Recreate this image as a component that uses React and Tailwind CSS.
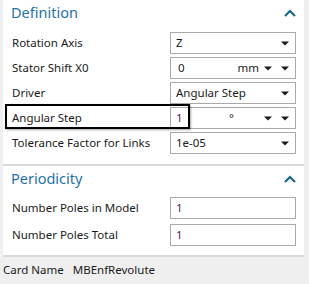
import React from 'react';

function Caret() {
  return (
    <svg width="8" height="5" viewBox="0 0 8 5" className="shrink-0">
      <path d="M0 0.5 L8 0.5 L4 4.5 Z" fill="#1a1a1a" />
    </svg>
  );
}

function ChevronUp() {
  return (
    <svg width="12" height="8" viewBox="0 0 12 8">
      <path d="M1 7 L6 2 L11 7" fill="none" stroke="#1d6688" strokeWidth="2.2" />
    </svg>
  );
}

function Field({ children }) {
  return (
    <div className="w-[126px] h-[22px] border border-[#a9a9a9] bg-white flex items-center pl-[5px] pr-[6px] text-[11.5px]">
      {children}
    </div>
  );
}

function Row({ label, children, highlight }) {
  return (
    <div className="relative flex items-center h-[22px]">
      <div className="w-[158px] text-[11.5px] text-[#1a1a1a]">{label}</div>
      {children}
      {highlight && (
        <div className="absolute left-[-7px] top-[-3px] w-[185px] h-[25px] border-2 border-black shadow-[1px_1px_2px_rgba(0,0,0,0.35)]" />
      )}
    </div>
  );
}

function Header({ title }) {
  return (
    <div className="h-[28px] flex items-center justify-between pl-[8px] pr-[8px] pb-[3px]">
      <span className="text-[14.5px] text-[#1f72a8]">{title}</span>
      <ChevronUp />
    </div>
  );
}

export default function App() {
  return (
    <div className="w-[309px] h-[284px] bg-[#efefef] pl-[3px] pr-[5px] text-[#1a1a1a]" style={{ fontFamily: '"Noto Sans", sans-serif' }}>
      <section className="bg-white pb-[10px] border-b-2 border-[#d9d9d9]">
        <Header title="Definition" />
        <div className="flex flex-col gap-[3px] pl-[9px] pt-[4px]">
          <Row label="Rotation Axis">
            <Field>
              <span className="flex-1">Z</span>
              <Caret />
            </Field>
          </Row>
          <Row label="Stator Shift X0">
            <Field>
              <span className="flex-1 pl-[2px]">0</span>
              <span className="mr-[5px]">mm</span>
              <span className="mr-[9px]"><Caret /></span>
              <Caret />
            </Field>
          </Row>
          <Row label="Driver">
            <Field>
              <span className="flex-1">Angular Step</span>
              <Caret />
            </Field>
          </Row>
          <Row label="Angular Step" highlight>
            <Field>
              <span className="flex-1 text-[#4a1f66]">1</span>
              <span className="mr-[30px]">°</span>
              <span className="mr-[9px]"><Caret /></span>
              <Caret />
            </Field>
          </Row>
          <Row label="Tolerance Factor for Links">
            <Field>
              <span className="flex-1">1e-05</span>
              <Caret />
            </Field>
          </Row>
        </div>
      </section>
      <section className="bg-white pb-[9px] border-b-2 border-[#d9d9d9]">
        <Header title="Periodicity" />
        <div className="flex flex-col gap-[5px] pl-[9px] pt-[3px]">
          <Row label="Number Poles in Model">
            <Field>
              <span className="flex-1 text-[#4a1f66]">1</span>
            </Field>
          </Row>
          <Row label="Number Poles Total">
            <Field>
              <span className="flex-1 text-[#4a1f66]">1</span>
            </Field>
          </Row>
        </div>
      </section>
      <div className="flex items-center h-[26px] text-[11.5px] gap-[9px]">
        <span>Card Name</span>
        <span>MBEnfRevolute</span>
      </div>
    </div>
  );
}
